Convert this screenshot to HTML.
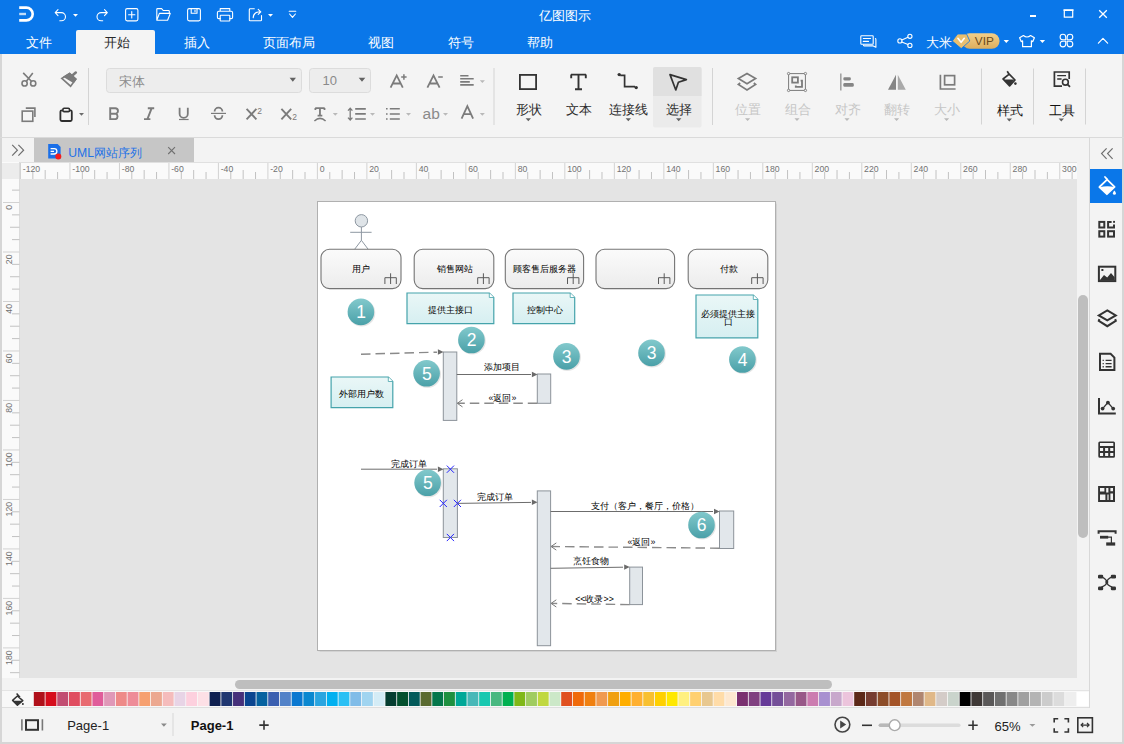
<!DOCTYPE html>
<html><head><meta charset="utf-8">
<style>
*{margin:0;padding:0;box-sizing:border-box}
html,body{width:1124px;height:744px;overflow:hidden;background:#f4f4f4;font-family:"Liberation Sans",sans-serif}
.a{position:absolute}
#root{position:relative;width:1124px;height:744px;overflow:hidden}
.t{position:absolute;white-space:nowrap;line-height:1}
svg{position:absolute;left:0;top:0;overflow:visible}
</style></head><body><div id="root">
<!-- title + menu bar -->
<div class="a" style="left:0;top:0;width:1124px;height:54px;background:#0a77e9"></div>
<!-- active tab -->
<div class="a" style="left:76px;top:30px;width:79px;height:24px;background:#f4f4f4;border-radius:2px 2px 0 0"></div>
<!-- ribbon -->
<div class="a" style="left:0;top:54px;width:1124px;height:83px;background:#f4f4f4"></div>
<div class="a" style="left:0;top:54px;width:2px;height:690px;background:#d6d6d6"></div>
<div class="a" style="left:1122px;top:54px;width:2px;height:690px;background:#d6d6d6"></div>
<div class="a" style="left:0;top:137px;width:1124px;height:1px;background:#dadada"></div>
<!-- tab bar -->
<div class="a" style="left:2px;top:138px;width:1088px;height:24px;background:#f3f3f3"></div>
<div class="a" style="left:34px;top:138px;width:160px;height:24px;background:#c6c6c6"></div>
<!-- rulers -->
<div class="a" style="left:2px;top:162px;width:1075px;height:18px;background:#fafafa;border-top:1px solid #e0e0e0;border-bottom:1px solid #dcdcdc"></div>
<div class="a" style="left:2px;top:162px;width:17.5px;height:516px;background:#fafafa;border-right:1px solid #dcdcdc"></div>
<div class="a" style="left:2px;top:163px;width:17px;height:16px;background:#ececec"></div>
<!-- canvas -->
<div class="a" style="left:20px;top:179px;width:1057px;height:499px;background:#e4e4e4"></div>
<!-- vertical scroll track -->
<div class="a" style="left:1077px;top:162px;width:13px;height:529px;background:#f3f3f3"></div>
<div class="a" style="left:1078px;top:295px;width:10px;height:243px;background:#bebebe;border-radius:5px"></div>
<!-- horizontal scroll -->
<div class="a" style="left:2px;top:678px;width:1075px;height:13px;background:#f3f3f3"></div>
<div class="a" style="left:235px;top:680px;width:597px;height:9px;background:#bebebe;border-radius:4.5px"></div>
<!-- palette -->
<div class="a" style="left:2px;top:690px;width:1088px;height:18px;background:#f8f8f8;border-top:1px solid #e4e4e4;border-bottom:1px solid #dedede"></div>
<!-- status bar -->
<div class="a" style="left:2px;top:708px;width:1120px;height:34px;background:#f3f3f3"></div>
<div class="a" style="left:0;top:742px;width:1124px;height:2px;background:#d6d6d6"></div>
<!-- right sidebar -->
<div class="a" style="left:1089px;top:138px;width:1px;height:570px;background:#d8d8d8"></div>
<div class="a" style="left:1090px;top:138px;width:32px;height:570px;background:#f3f3f3"></div>
<div class="a" style="left:1090px;top:169px;width:32px;height:34px;background:#0a77e9"></div>
<svg width="1124" height="744" font-family="Liberation Sans, sans-serif">
<g id="rulers">
<path d="M20.46,163 V179 M69.95,163 V179 M119.44,163 V179 M168.93,163 V179 M218.42,163 V179 M267.91,163 V179 M317.40,163 V179 M366.89,163 V179 M416.38,163 V179 M465.87,163 V179 M515.36,163 V179 M564.85,163 V179 M614.34,163 V179 M663.83,163 V179 M713.32,163 V179 M762.81,163 V179 M812.30,163 V179 M861.79,163 V179 M911.28,163 V179 M960.77,163 V179 M1010.26,163 V179 M1059.75,163 V179" stroke="#d2d2d2" stroke-width="1" fill="none"/>
<path d="M32.83,172 V179 M45.20,170 V179 M57.58,172 V179 M82.32,172 V179 M94.69,170 V179 M107.07,172 V179 M131.81,172 V179 M144.18,170 V179 M156.56,172 V179 M181.30,172 V179 M193.67,170 V179 M206.05,172 V179 M230.79,172 V179 M243.16,170 V179 M255.54,172 V179 M280.28,172 V179 M292.65,170 V179 M305.03,172 V179 M329.77,172 V179 M342.14,170 V179 M354.52,172 V179 M379.26,172 V179 M391.63,170 V179 M404.01,172 V179 M428.75,172 V179 M441.12,170 V179 M453.50,172 V179 M478.24,172 V179 M490.62,170 V179 M502.99,172 V179 M527.73,172 V179 M540.11,170 V179 M552.48,172 V179 M577.22,172 V179 M589.60,170 V179 M601.97,172 V179 M626.71,172 V179 M639.08,170 V179 M651.46,172 V179 M676.20,172 V179 M688.57,170 V179 M700.95,172 V179 M725.69,172 V179 M738.06,170 V179 M750.44,172 V179 M775.18,172 V179 M787.55,170 V179 M799.93,172 V179 M824.67,172 V179 M837.04,170 V179 M849.42,172 V179 M874.16,172 V179 M886.53,170 V179 M898.91,172 V179 M923.65,172 V179 M936.02,170 V179 M948.40,172 V179 M973.14,172 V179 M985.51,170 V179 M997.89,172 V179 M1022.63,172 V179 M1035.00,170 V179 M1047.38,172 V179 M1072.12,172 V179" stroke="#c2c2c2" stroke-width="1" fill="none"/>
<path d="M3,202.50 H19.5 M3,251.99 H19.5 M3,301.48 H19.5 M3,350.97 H19.5 M3,400.46 H19.5 M3,449.95 H19.5 M3,499.44 H19.5 M3,548.93 H19.5 M3,598.42 H19.5 M3,647.91 H19.5" stroke="#d2d2d2" stroke-width="1" fill="none"/>
<path d="M12,190.13 H19.5 M12,214.87 H19.5 M10,227.25 H19.5 M12,239.62 H19.5 M12,264.36 H19.5 M10,276.74 H19.5 M12,289.11 H19.5 M12,313.85 H19.5 M10,326.23 H19.5 M12,338.60 H19.5 M12,363.34 H19.5 M10,375.72 H19.5 M12,388.09 H19.5 M12,412.83 H19.5 M10,425.21 H19.5 M12,437.58 H19.5 M12,462.32 H19.5 M10,474.70 H19.5 M12,487.07 H19.5 M12,511.81 H19.5 M10,524.18 H19.5 M12,536.56 H19.5 M12,561.30 H19.5 M10,573.68 H19.5 M12,586.05 H19.5 M12,610.79 H19.5 M10,623.17 H19.5 M12,635.54 H19.5 M12,660.28 H19.5 M10,672.66 H19.5" stroke="#c2c2c2" stroke-width="1" fill="none"/>
<g font-size="8.7" fill="#727272"><text x="22.76" y="172">-120</text><text x="72.25" y="172">-100</text><text x="121.74" y="172">-80</text><text x="171.23" y="172">-60</text><text x="220.72" y="172">-40</text><text x="270.21" y="172">-20</text><text x="319.70" y="172">0</text><text x="369.19" y="172">20</text><text x="418.68" y="172">40</text><text x="468.17" y="172">60</text><text x="517.66" y="172">80</text><text x="567.15" y="172">100</text><text x="616.64" y="172">120</text><text x="666.13" y="172">140</text><text x="715.62" y="172">160</text><text x="765.11" y="172">180</text><text x="814.60" y="172">200</text><text x="864.09" y="172">220</text><text x="913.58" y="172">240</text><text x="963.07" y="172">260</text><text x="1012.56" y="172">280</text><text x="1062.05" y="172">300</text><text transform="translate(12,205.00) rotate(-90)" text-anchor="end">0</text><text transform="translate(12,254.49) rotate(-90)" text-anchor="end">20</text><text transform="translate(12,303.98) rotate(-90)" text-anchor="end">40</text><text transform="translate(12,353.47) rotate(-90)" text-anchor="end">60</text><text transform="translate(12,402.96) rotate(-90)" text-anchor="end">80</text><text transform="translate(12,452.45) rotate(-90)" text-anchor="end">100</text><text transform="translate(12,501.94) rotate(-90)" text-anchor="end">120</text><text transform="translate(12,551.43) rotate(-90)" text-anchor="end">140</text><text transform="translate(12,600.92) rotate(-90)" text-anchor="end">160</text><text transform="translate(12,650.41) rotate(-90)" text-anchor="end">180</text></g>
</g>
</svg>

<svg width="1124" height="744" font-family="Liberation Sans, sans-serif">
<g id="tabbar">
 <path d="M12.2,144.8 L17.4,150.2 L12.2,155.6 M18.4,144.8 L23.6,150.2 L18.4,155.6" fill="none" stroke="#6e6e6e" stroke-width="1.2"/>
 <path d="M48.2,144 H57.6 L60.6,147 V158.4 H48.2 Z" fill="#1a6fe8"/>
 <path d="M50.6,148.6 H54.2 A2.7,2.7 0 0 1 54.2,154 H50.6 M50.6,151.3 H54" fill="none" stroke="#fff" stroke-width="1.3"/>
 <circle cx="58.3" cy="156.4" r="3" fill="#f41c1c"/>
 <text x="68.2" y="156.7" font-size="12.2" fill="#1f72e6">UML网站序列</text>
 <path d="M168.2,147.2 L175,154 M175,147.2 L168.2,154" stroke="#707070" stroke-width="1.1"/>
</g>
<g id="sidebar" fill="none" stroke="#333" stroke-width="1.7">
 <path d="M1106.6,148.4 L1101.6,153.6 L1106.6,158.8 M1112.6,148.4 L1107.6,153.6 L1112.6,158.8" stroke="#6e6e6e" stroke-width="1.2"/>
 <path d="M1105,177 L1107.2,179.4" stroke="#fff" stroke-width="1.8" stroke-linecap="round"/>
 <path d="M1107.1,179.6 L1114.6,186.8 L1106.9,194.2 L1099.4,187 Z" stroke="#fff" stroke-width="1.8" stroke-linejoin="round"/>
 <path d="M1099.6,187.2 Q1107,185.2 1114.4,187 L1106.9,194.2 Z" fill="#fff" stroke="none"/>
 <path d="M1114.4,190.6 Q1115.9,192.4 1115.9,193.2 A1.5,1.5 0 0 1 1112.9,193.2 Q1112.9,192.4 1114.4,190.6 Z" fill="#fff" stroke="none"/>
 <rect x="1099.3" y="221.9" width="5" height="5.6" stroke-width="2"/><rect x="1099.3" y="231.2" width="5" height="5.4" stroke-width="2"/><rect x="1108.1" y="231.2" width="5.9" height="5.4" stroke-width="2"/>
 <path d="M1111.6,221.9 H1108.1 V227.5 H1114 V224.4" stroke-width="2"/>
 <rect x="1113.1" y="220.9" width="1.9" height="1.9" fill="#333" stroke="none"/>
 <rect x="1098.9" y="266.7" width="16.4" height="14.4" stroke-width="2"/>
 <path d="M1099.6,280.4 L1104,275 L1107.2,277.6 L1111,273 L1114.6,277.2 V280.4 Z" fill="#333" stroke="none"/>
 <rect x="1101.4" y="269" width="2" height="2" fill="#333" stroke="none"/>
 <path d="M1107.3,310.4 L1115.8,315.4 L1107.3,320.4 L1098.8,315.4 Z" stroke-width="2"/>
 <path d="M1099.4,319.2 L1098.8,320.8 L1107.3,326.2 L1115.8,320.8 L1115.2,319.2" stroke-width="2"/>
 <path d="M1100,353.8 H1110.6 L1114.4,357.6 V370 H1100 Z" stroke-width="2"/>
 <path d="M1102.6,360.4 H1103.8 M1105.6,360.4 H1111.6 M1102.6,363.6 H1103.8 M1105.6,363.6 H1111.6 M1102.6,366.8 H1103.8 M1105.6,366.8 H1111.6" stroke-width="1.4"/>
 <path d="M1099,398 V413.4 H1115.8" stroke-width="2"/>
 <path d="M1102.6,408.6 L1107.9,402.6 L1113.2,408.6" stroke-width="1.3"/>
 <circle cx="1107.9" cy="402.6" r="1.9" fill="#333" stroke="none"/><circle cx="1102.6" cy="408.6" r="1.9" fill="#333" stroke="none"/><circle cx="1113.2" cy="408.6" r="1.9" fill="#333" stroke="none"/>
 <path fill="#333" stroke="none" fill-rule="evenodd" d="M1099.8,441.4 H1113.5 Q1115,441.4 1115,442.9 V456.2 Q1115,457.7 1113.5,457.7 H1099.8 Q1098.3,457.7 1098.3,456.2 V442.9 Q1098.3,441.4 1099.8,441.4 Z M1100,443 H1113.3 V446.1 H1100 Z M1100,448 H1103.1 V451.1 H1100 Z M1105.1,448 H1108.2 V451.1 H1105.1 Z M1110.2,448 H1113.3 V451.1 H1110.2 Z M1100,453 H1103.1 V456.1 H1100 Z M1105.1,453 H1108.2 V456.1 H1105.1 Z M1110.2,453 H1113.3 V456.1 H1110.2 Z"/>
 <path fill="#333" stroke="none" fill-rule="evenodd" d="M1098.1,486 H1115 V502 H1098.1 Z M1100,488 H1104.4 V491.6 H1100 Z M1100,494.4 H1105.4 V500 H1100 Z M1106.2,488 V492.6 H1108.4 V488 Z M1110.4,488 H1113 V491.2 H1110.4 Z M1107.4,494.6 H1108.6 V500 H1107.4 Z M1110.4,493.4 H1113 V500 H1110.4 Z"/>
 <path d="M1098.6,533.8 V531.2 H1115.6 V533.8" stroke-width="2"/>
 <rect x="1100" y="535.8" width="8.2" height="2.8" fill="#333" stroke="none"/>
 <path d="M1108,537.2 H1111.4 V543" stroke-width="1.2"/>
 <rect x="1106.2" y="542.4" width="9" height="3.2" fill="#333" stroke="none"/>
 <path d="M1101.4,576.8 Q1106.8,579 1106.8,582 Q1106.8,585 1101.4,587.2 M1112.2,576.8 Q1106.8,579 1106.8,582 Q1106.8,585 1112.2,587.2" stroke-width="1.3"/>
 <rect x="1098" y="574.8" width="5.2" height="3.8" rx="1.3" fill="#333" stroke="none"/><rect x="1110.8" y="574.8" width="5.2" height="3.8" rx="1.3" fill="#333" stroke="none"/>
 <rect x="1098" y="586.4" width="5.2" height="3.8" rx="1.3" fill="#333" stroke="none"/><rect x="1110.8" y="586.4" width="5.2" height="3.8" rx="1.3" fill="#333" stroke="none"/>
 <rect x="1105.4" y="580.6" width="2.8" height="2.8" fill="#333" stroke="none"/>
</g>
<g id="status">
 <path d="M21.9,719.2 V730.6 M42.4,719.2 V730.6" stroke="#777" stroke-width="1.6"/>
 <rect x="26" y="720.2" width="12" height="9.6" fill="none" stroke="#333" stroke-width="2"/>
 <text x="67.2" y="729.8" font-size="13" fill="#222">Page-1</text>
 <path d="M161,723.6 H166.8 L163.9,726.8 Z" fill="#8a8a8a"/>
 <rect x="172.5" y="713" width="1" height="23" fill="#d8d8d8"/>
 <text x="190.8" y="729.8" font-size="13" font-weight="bold" fill="#111">Page-1</text>
 <path d="M264,720.4 V729.8 M259.3,725.1 H268.7" stroke="#333" stroke-width="1.6"/>
 <circle cx="842.4" cy="724.6" r="7.4" fill="none" stroke="#444" stroke-width="1.6"/>
 <path d="M840.2,720.6 L846.2,724.6 L840.2,728.6 Z" fill="#444"/>
 <path d="M862,725.3 H872" stroke="#333" stroke-width="1.6"/>
 <rect x="878.6" y="723.4" width="82" height="3.6" rx="1.8" fill="#dcdcdc"/>
 <rect x="878.6" y="723.4" width="16" height="3.6" rx="1.8" fill="#b8b8b8"/>
 <circle cx="894.7" cy="725.2" r="5.4" fill="#fff" stroke="#aaa" stroke-width="1.4"/>
 <path d="M973,720.6 V730 M968.3,725.3 H977.7" stroke="#333" stroke-width="1.6"/>
 <text x="994.6" y="731" font-size="13" fill="#222">65%</text>
 <path d="M1029.4,724 H1035.4 L1032.4,726.8 Z" fill="#999"/>
 <path d="M1054.2,722.6 V718.7 H1058.2 M1064.4,718.7 H1068.4 V722.6 M1068.4,728.2 V732 H1064.4 M1058.2,732 H1054.2 V728.2" fill="none" stroke="#333" stroke-width="1.6"/>
 <rect x="1077.8" y="717.8" width="14.6" height="14.6" fill="none" stroke="#333" stroke-width="1.6"/>
 <path d="M1081.2,725.1 H1089 M1083.2,723 L1081.1,725.1 L1083.2,727.2 M1087,723 L1089.1,725.1 L1087,727.2" fill="none" stroke="#333" stroke-width="1.2"/>
 <path d="M16.6,693.4 L20,697.2 M12.6,700.4 L17.4,696 L22.8,700.6 L17.4,705.2 Z" fill="none" stroke="#333" stroke-width="1.5" stroke-linejoin="round"/>
 <path d="M12.8,700.8 H22.6 L17.4,705 Z" fill="#333"/>
 <circle cx="22.9" cy="703.9" r="1" fill="#333"/>
</g>
</svg>
<svg width="1124" height="744"><g id="palette"><rect x="33.80" y="692" width="10.9" height="14" fill="#b0101a"/><rect x="45.52" y="692" width="10.9" height="14" fill="#d60c1c"/><rect x="57.24" y="692" width="10.9" height="14" fill="#c24d72"/><rect x="68.96" y="692" width="10.9" height="14" fill="#e04d60"/><rect x="80.68" y="692" width="10.9" height="14" fill="#e86a70"/><rect x="92.40" y="692" width="10.9" height="14" fill="#e05c9a"/><rect x="104.12" y="692" width="10.9" height="14" fill="#e098b8"/><rect x="115.84" y="692" width="10.9" height="14" fill="#ee8a88"/><rect x="127.56" y="692" width="10.9" height="14" fill="#ee8c98"/><rect x="139.28" y="692" width="10.9" height="14" fill="#f6a070"/><rect x="151.00" y="692" width="10.9" height="14" fill="#eca890"/><rect x="162.72" y="692" width="10.9" height="14" fill="#f5bcbc"/><rect x="174.44" y="692" width="10.9" height="14" fill="#e8d4e6"/><rect x="186.16" y="692" width="10.9" height="14" fill="#fdd0de"/><rect x="197.88" y="692" width="10.9" height="14" fill="#fde0e6"/><rect x="209.60" y="692" width="10.9" height="14" fill="#0f2050"/><rect x="221.32" y="692" width="10.9" height="14" fill="#1f3670"/><rect x="233.04" y="692" width="10.9" height="14" fill="#46307a"/><rect x="244.76" y="692" width="10.9" height="14" fill="#0a4590"/><rect x="256.48" y="692" width="10.9" height="14" fill="#0562a0"/><rect x="268.20" y="692" width="10.9" height="14" fill="#3b5fb0"/><rect x="279.92" y="692" width="10.9" height="14" fill="#5282c8"/><rect x="291.64" y="692" width="10.9" height="14" fill="#0a78d0"/><rect x="303.36" y="692" width="10.9" height="14" fill="#0a88d0"/><rect x="315.08" y="692" width="10.9" height="14" fill="#2aa5e0"/><rect x="326.80" y="692" width="10.9" height="14" fill="#00b0f0"/><rect x="338.52" y="692" width="10.9" height="14" fill="#2ac0f4"/><rect x="350.24" y="692" width="10.9" height="14" fill="#80bce8"/><rect x="361.96" y="692" width="10.9" height="14" fill="#a0d4f0"/><rect x="373.68" y="692" width="10.9" height="14" fill="#d4ecf6"/><rect x="385.40" y="692" width="10.9" height="14" fill="#053d30"/><rect x="397.12" y="692" width="10.9" height="14" fill="#03502e"/><rect x="408.84" y="692" width="10.9" height="14" fill="#035a5a"/><rect x="420.56" y="692" width="10.9" height="14" fill="#5a6a30"/><rect x="432.28" y="692" width="10.9" height="14" fill="#04764a"/><rect x="444.00" y="692" width="10.9" height="14" fill="#1e9040"/><rect x="455.72" y="692" width="10.9" height="14" fill="#00a898"/><rect x="467.44" y="692" width="10.9" height="14" fill="#48b8b8"/><rect x="479.16" y="692" width="10.9" height="14" fill="#18c8b0"/><rect x="490.88" y="692" width="10.9" height="14" fill="#48b880"/><rect x="502.60" y="692" width="10.9" height="14" fill="#00b050"/><rect x="514.32" y="692" width="10.9" height="14" fill="#80b818"/><rect x="526.04" y="692" width="10.9" height="14" fill="#a0cc60"/><rect x="537.76" y="692" width="10.9" height="14" fill="#c0d840"/><rect x="549.48" y="692" width="10.9" height="14" fill="#cce8c8"/><rect x="561.20" y="692" width="10.9" height="14" fill="#e05020"/><rect x="572.92" y="692" width="10.9" height="14" fill="#f06a0a"/><rect x="584.64" y="692" width="10.9" height="14" fill="#f08010"/><rect x="596.36" y="692" width="10.9" height="14" fill="#f09a50"/><rect x="608.08" y="692" width="10.9" height="14" fill="#f0a010"/><rect x="619.80" y="692" width="10.9" height="14" fill="#ffae00"/><rect x="631.52" y="692" width="10.9" height="14" fill="#ffb030"/><rect x="643.24" y="692" width="10.9" height="14" fill="#f8c030"/><rect x="654.96" y="692" width="10.9" height="14" fill="#ffd000"/><rect x="666.68" y="692" width="10.9" height="14" fill="#ffe800"/><rect x="678.40" y="692" width="10.9" height="14" fill="#fff080"/><rect x="690.12" y="692" width="10.9" height="14" fill="#ffd070"/><rect x="701.84" y="692" width="10.9" height="14" fill="#e8c890"/><rect x="713.56" y="692" width="10.9" height="14" fill="#ffdca8"/><rect x="725.28" y="692" width="10.9" height="14" fill="#fde8d0"/><rect x="737.00" y="692" width="10.9" height="14" fill="#7a3070"/><rect x="748.72" y="692" width="10.9" height="14" fill="#804080"/><rect x="760.44" y="692" width="10.9" height="14" fill="#663a98"/><rect x="772.16" y="692" width="10.9" height="14" fill="#744f98"/><rect x="783.88" y="692" width="10.9" height="14" fill="#9468a0"/><rect x="795.60" y="692" width="10.9" height="14" fill="#985888"/><rect x="807.32" y="692" width="10.9" height="14" fill="#cc7cb0"/><rect x="819.04" y="692" width="10.9" height="14" fill="#a890d0"/><rect x="830.76" y="692" width="10.9" height="14" fill="#c8a8cc"/><rect x="842.48" y="692" width="10.9" height="14" fill="#ecc4dc"/><rect x="854.20" y="692" width="10.9" height="14" fill="#5c2818"/><rect x="865.92" y="692" width="10.9" height="14" fill="#763c30"/><rect x="877.64" y="692" width="10.9" height="14" fill="#8c4c28"/><rect x="889.36" y="692" width="10.9" height="14" fill="#a45428"/><rect x="901.08" y="692" width="10.9" height="14" fill="#c07840"/><rect x="912.80" y="692" width="10.9" height="14" fill="#b08670"/><rect x="924.52" y="692" width="10.9" height="14" fill="#e0b888"/><rect x="936.24" y="692" width="10.9" height="14" fill="#d4ccc8"/><rect x="947.96" y="692" width="10.9" height="14" fill="#cad4cc"/><rect x="959.68" y="692" width="10.9" height="14" fill="#000000"/><rect x="971.40" y="692" width="10.9" height="14" fill="#3e3836"/><rect x="983.12" y="692" width="10.9" height="14" fill="#5a5858"/><rect x="994.84" y="692" width="10.9" height="14" fill="#707070"/><rect x="1006.56" y="692" width="10.9" height="14" fill="#888888"/><rect x="1018.28" y="692" width="10.9" height="14" fill="#a0a0a0"/><rect x="1030.00" y="692" width="10.9" height="14" fill="#b4b4b4"/><rect x="1041.72" y="692" width="10.9" height="14" fill="#cccccc"/><rect x="1053.44" y="692" width="10.9" height="14" fill="#dcdcdc"/><rect x="1065.16" y="692" width="10.9" height="14" fill="#eeeeee"/><rect x="1076.88" y="692" width="11.8" height="14" fill="#ffffff"/></g></svg>
<!-- page -->
<div class="a" style="left:317px;top:201px;width:459px;height:450px;background:#fff;border:1px solid #b0b0b0;box-shadow:0.5px 0.5px 1px rgba(0,0,0,0.08)"></div>

<svg width="1124" height="744" font-family="Liberation Sans, sans-serif">
<g id="titleicons" fill="none" stroke="#fff" stroke-width="1.1" stroke-linecap="round" stroke-linejoin="round">
 <path d="M19.2,7.6 H26.3 A6.4,6.4 0 0 1 26.3,20.4 H19.2" stroke-width="2.6" stroke-linecap="butt"/>
 <path d="M19.2,14 H26" stroke-width="2.4" stroke-opacity="0.75" stroke-linecap="butt"/>
 <path d="M58,9.6 L55.2,12.6 L58,15.6 M55.6,12.6 H61.4 A4.1,4.1 0 0 1 61.4,20.8 H59.8"/>
 <path d="M73,14 H78 L75.5,16.8 Z" fill="#fff" stroke="none"/>
 <path d="M104.5,9.6 L107.3,12.6 L104.5,15.6 M106.9,12.6 H101.1 A4.1,4.1 0 0 0 101.1,20.8 H102.7"/>
 <rect x="125.6" y="8.6" width="12.3" height="12.3" rx="1.6"/>
 <path d="M131.75,11.6 V17.9 M128.6,14.75 H134.9"/>
 <path d="M156.8,20.3 V9.3 Q156.8,8.6 157.5,8.6 H161.6 L163.2,10.5 H168.6 Q169.3,10.5 169.3,11.2 V13.3 M156.8,20.3 H167.6 L170.3,13.4 H159.4 Z"/>
 <rect x="187.6" y="8.6" width="12.8" height="12.3" rx="1.6"/>
 <path d="M191.2,8.8 V13.2 H197 V8.8 M195,10 V11.8"/>
 <path d="M220.2,11.3 V8.6 H229.8 V11.3 M220.2,18.6 H218.8 Q217.4,18.6 217.4,17.2 V12.7 Q217.4,11.3 218.8,11.3 H231.2 Q232.6,11.3 232.6,12.7 V17.2 Q232.6,18.6 231.2,18.6 H229.8"/>
 <rect x="220.2" y="15.2" width="9.6" height="5.8" rx="0.6"/>
 <path d="M254.3,8.8 H250.2 Q249.3,8.8 249.3,9.7 V20 Q249.3,20.8 250.2,20.8 H260.6 Q261.5,20.8 261.5,20 V15.6"/>
 <path d="M253.2,17.6 Q253.6,11.8 260.6,11.8 M258.2,9.3 L260.8,11.8 L258.2,14.3"/>
 <path d="M268,14 H273 L270.5,16.8 Z" fill="#fff" stroke="none"/>
 <path d="M289.2,11.3 H295.8 M289.6,14 L292.5,17.4 L295.4,14" stroke-width="1.1"/>
 <rect x="1030" y="15" width="6" height="2" fill="#fff" stroke="none"/>
 <path d="M1064.3,10.4 H1072.7 V17.2 H1064.3 Z" stroke-width="1.2"/>
 <path d="M1064,10 H1073" stroke-width="1.6"/>
 <path d="M1099.2,10.2 L1106.8,17.8 M1106.8,10.2 L1099.2,17.8" stroke-width="1.3" stroke-linecap="butt"/>
 <path d="M861.5,35.8 H872.5 Q873.2,35.8 873.2,36.5 V43.5 Q873.2,44.2 872.5,44.2 H861.5 Q860.8,44.2 860.8,43.5 V36.5 Q860.8,35.8 861.5,35.8 Z M863.3,38.5 H870.6 M863.3,41.4 H868.5"/>
 <path d="M875.4,38.6 Q875.9,38.7 875.9,39.4 V47.2 L873.2,45.9 H864.2 Q863.4,45.9 863.4,45.1"/>
 <circle cx="899.9" cy="40.9" r="2.1"/><circle cx="909.9" cy="36.3" r="2.1"/><circle cx="909.9" cy="45.4" r="2.1"/>
 <path d="M901.8,39.9 L908,37.3 M901.8,41.9 L908,44.4"/>
 <path d="M1003.6,40 H1009 L1006.3,43 Z" fill="#fff" stroke="none"/>
 <path d="M1023.4,35.5 L1019.6,37.8 L1021.2,41.6 L1022.6,40.9 V46.7 H1031.4 V40.9 L1032.8,41.6 L1034.4,37.8 L1030.6,35.5 Q1027,38.5 1023.4,35.5 Z" stroke-width="1.2"/>
 <path d="M1039.7,40 H1045.1 L1042.4,43 Z" fill="#fff" stroke="none"/>
 <path d="M1065.7,39.8 H1062.9 A2.8,2.8 0 1 1 1065.7,37 Z M1067.2,39.8 H1070 A2.8,2.8 0 1 0 1067.2,37 Z M1065.7,41.3 H1062.9 A2.8,2.8 0 1 0 1065.7,44.1 Z M1067.2,41.3 H1070 A2.8,2.8 0 1 1 1067.2,44.1 Z" stroke-width="1.1"/>
 <path d="M1098.4,43.2 L1103,38.4 L1107.6,43.2" stroke-width="1.2"/>
</g>
<g id="vip">
 <defs><linearGradient id="gold" x1="0" y1="0" x2="0" y2="1"><stop offset="0" stop-color="#f3cf88"/><stop offset="1" stop-color="#dcae5e"/></linearGradient></defs>
 <rect x="962" y="33.3" width="37.6" height="15.5" rx="7.75" fill="url(#gold)"/>
 <path d="M952.3,41 L957.6,34 H966.6 L969.8,41 L961.2,48.6 Z" fill="#e9bf6f" stroke="#0a77e9" stroke-width="0.8"/>
 <path d="M957.9,38.3 L961.1,42.3 L964.3,38.3" fill="none" stroke="#fff" stroke-width="1.6" stroke-linecap="round" stroke-linejoin="round"/>
 <text x="974.8" y="45.2" font-size="11.8" fill="#6a4a1c">VIP</text>
</g>
<g id="menutext" font-size="12.6" fill="#fff">
 <text x="538.6" y="20.4" font-size="12.5">亿图图示</text>
 <text x="25.9" y="46.9">文件</text>
 <text x="103.9" y="47.2" fill="#2a2a2a">开始</text>
 <text x="183.9" y="46.9">插入</text>
 <text x="263.4" y="46.9">页面布局</text>
 <text x="367.9" y="46.9">视图</text>
 <text x="447.9" y="46.9">符号</text>
 <text x="527.4" y="46.9">帮助</text>
 <text x="926" y="47">大米</text>
</g>
</svg>

<svg width="1124" height="744" font-family="Liberation Sans, sans-serif">
<g id="ribbonbg">
 <rect x="106.5" y="68.5" width="195" height="24" rx="3" fill="#ededed" stroke="#dcdcdc"/>
 <rect x="309.5" y="68.5" width="61" height="24" rx="3" fill="#ededed" stroke="#dcdcdc"/>
 <rect x="653" y="67" width="48.6" height="60.6" rx="2" fill="#ebebeb"/>
 <path d="M655,67 H699.6 Q701.6,67 701.6,69 V96 H653 V69 Q653,67 655,67 Z" fill="#e0e0e0"/>
 <g fill="#d4d4d4"><rect x="88" y="68" width="1" height="57"/><rect x="493.5" y="68" width="1" height="57"/><rect x="712" y="68" width="1" height="57"/><rect x="981" y="68.5" width="1" height="56"/><rect x="1033" y="68.5" width="1" height="56"/><rect x="1085" y="68.5" width="1" height="56"/></g>
</g>
<g id="ribbonicons" fill="none" stroke="#7b7b7b" stroke-width="1.6">
 <circle cx="24.6" cy="83.4" r="2.6"/><circle cx="33.2" cy="83.4" r="2.6"/>
 <path d="M23.2,72.9 L31.4,81.3 M32.8,72.9 L26.4,81.3"/>
 <path d="M61.8,78.4 L69.6,73.6 L75.8,79.2 L70.6,86.2 Z"/>
 <path d="M64.5,76.7 L69.6,73.6 L75.8,79.2 L73.6,82.2 Z" fill="#7b7b7b"/>
 <path d="M71.2,76.4 L75.8,72.6" stroke-width="2.6" stroke-linecap="round"/>
 <rect x="22.2" y="111.1" width="10.6" height="10.2"/>
 <path d="M25.8,108.1 H34.9 V117"/>
 <rect x="60.4" y="110.4" width="11.4" height="10.6" rx="1.4" stroke="#2e2e2e" stroke-width="1.8"/>
 <rect x="62.9" y="108.2" width="6.6" height="3.4" rx="1.2" stroke="#2e2e2e" stroke-width="1.6" fill="#f4f4f4"/>
 <path d="M79,112.9 H84 L81.5,115.8 Z" fill="#6b6b6b" stroke="none"/>
 <path d="M110.2,108.2 H115.2 A2.75,2.75 0 0 1 115.2,113.7 H110.2 Z M110.2,113.7 H115.8 A2.95,2.95 0 0 1 115.8,119.1 H110.2 Z" stroke-width="1.9"/>
 <path d="M147.8,108.3 H154.2 M144,119.1 H150.4 M151.6,108.3 L147.4,119.1" stroke-width="1.9"/>
 <path d="M179.6,107.8 V113.8 A4.1,4.1 0 0 0 187.8,113.8 V107.8" stroke-width="1.8"/>
 <path d="M179,119.5 H188.6" stroke-width="1.2"/>
 <path d="M211,113.4 H226" stroke-width="1.2"/>
 <path d="M214.6,111.6 A3.9,3.9 0 0 1 222.4,111.6 M214.6,115.3 A3.9,3.9 0 0 0 222.4,115.3" stroke-width="1.8"/>
 <path d="M246.6,108.9 L256.4,119.4 M256.4,108.9 L246.6,119.4" stroke-width="1.9"/>
 <path d="M281.4,108.9 L291.2,119.4 M291.2,108.9 L281.4,119.4" stroke-width="1.9"/>
 <path d="M315.2,108.1 H324.7 M319.95,108.1 V115.6 M317.6,115.6 H322.3 M315.4,108.1 V110 M324.5,108.1 V110" stroke-width="1.8"/>
 <path d="M314.4,121 Q320,115.8 325.6,121" stroke-width="1.5"/>
 <path d="M350.2,108.2 V120 M348,110.6 L350.2,108.2 L352.4,110.6 M348,117.6 L350.2,120 L352.4,117.6" stroke-width="1.3"/>
 <path d="M355.2,108.8 H365.8 M355.2,113.8 H365.8 M355.2,119 H365.8" stroke-width="1.7"/>
 <path d="M386,108.8 H387.6 M386,114 H387.6 M386,119 H387.6 M389.8,108.8 H399.8 M389.8,114 H399.8 M389.8,119 H399.8" stroke-width="1.6"/>
 <path d="M390.6,87.6 L396.7,75.4 L402.8,87.6 M392.6,83.5 H400.8" stroke-width="1.8"/>
 <path d="M401.2,77 H406.6 M403.9,74.3 V79.7" stroke-width="1.5"/>
 <path d="M427.4,87.6 L433.5,75.4 L439.6,87.6 M429.4,83.5 H437.6" stroke-width="1.8"/>
 <path d="M438.2,77 H442.8" stroke-width="1.5"/>
 <path d="M460.2,75.8 H468.5 M460.2,78.8 H473.7 M460.2,81.9 H469.8 M460.2,84.9 H473.7" stroke-width="1.6"/>
 <path d="M461.6,118.7 L467.35,106.2 L473.1,118.7 M463.7,114.2 H471" stroke-width="1.8"/>
 <path d="M888,89.8 L896,74.7 V89.8 Z" fill="#858585" stroke="none"/>
 <path d="M897.8,74.7 L905.8,89.8 H897.8 Z" fill="#a9a9a9" stroke="none"/>
 <path d="M940.4,74.7 V89 H955.6" stroke-width="1.7"/>
 <rect x="944.6" y="75.6" width="10" height="9.2" stroke-width="1.7"/>
 <path d="M747,73.5 L755.6,78.6 L747,83.7 L738.4,78.6 Z" stroke-width="1.7"/>
 <path d="M740.2,83 L738.4,84.5 L747,90 L755.6,84.5 L753.8,83" stroke-width="1.7"/>
 <rect x="788.6" y="73.6" width="16.8" height="16.8" stroke-width="1"/>
 <g fill="#f4f4f4" stroke-width="0.9"><circle cx="788.6" cy="73.6" r="1.2"/><circle cx="805.4" cy="73.6" r="1.2"/><circle cx="788.6" cy="90.4" r="1.2"/><circle cx="805.4" cy="90.4" r="1.2"/></g>
 <rect x="792.2" y="77.3" width="5.7" height="5.3" stroke-width="1.8"/>
 <path d="M800.6,80.6 H802 V86.9 H795.8 V85.6" stroke-width="1.8"/>
 <path d="M840.8,73.5 V90.5" stroke="#a3a3a3" stroke-width="1.6"/>
 <rect x="843.3" y="77.3" width="7.6" height="3.2" rx="1.4" fill="#858585" stroke="none"/>
 <rect x="843.3" y="83.1" width="10.5" height="3.7" rx="1.4" fill="#858585" stroke="none"/>
</g>
<g fill="#b9b9b9">
 <path d="M332.8,113 H337.8 L335.3,115.7 Z M370,113 H375 L372.5,115.7 Z M406,113 H411 L408.5,115.7 Z M443,113 H448 L445.5,115.7 Z M479.8,113 H484.9 L482.35,115.7 Z M479.8,80.3 H484.9 L482.35,83 Z"/>
 <path d="M745,118.2 H750.2 L747.6,121 Z M794.4,118.2 H799.6 L797,121 Z M844.4,118.2 H849.6 L847,121 Z M894,118.2 H899.2 L896.6,121 Z M944,118.2 H949.2 L946.6,121 Z"/>
</g>
<g fill="#626262">
 <path d="M289.6,77.8 H296 L292.8,81.8 Z M358.7,77.8 H365.3 L362,81.8 Z"/>
 <path d="M525.6,118.2 H531 L528.3,121.2 Z M625.6,118.2 H631 L628.3,121.2 Z M676,118.2 H681.4 L678.7,121.2 Z M1006.6,118.4 H1012 L1009.3,121.4 Z M1058.6,118.4 H1064 L1061.3,121.4 Z"/>
</g>
<g id="darkicons" fill="none" stroke="#333" stroke-width="1.8">
 <rect x="519.9" y="74.9" width="16.2" height="14.2"/>
 <path d="M571,74.6 H586 M578.5,74.6 V89.2 M575,89.2 H582 M571.2,74.6 V78.2 M585.8,74.6 V78.2" stroke-width="1.9"/>
 <path d="M620.2,75.4 H624.6 V86.6 H635" stroke-width="1.7"/>
 <circle cx="619.2" cy="74.6" r="1.7" fill="#333" stroke="none"/><circle cx="636.2" cy="87.6" r="1.7" fill="#333" stroke="none"/>
 <path d="M670,74.6 L686.4,79.6 L678.4,82.2 L675.8,90 Z" stroke-width="1.7" stroke-linejoin="round"/>
 <path d="M1007.2,71.2 L1009.6,75 M1003,79 L1009.2,74.2 L1015,80 L1009.6,85.8 Z" stroke-width="1.7" stroke-linejoin="round"/>
 <path d="M1003.4,79.4 H1014.6 L1009.6,85.4 Z" fill="#333" stroke="none"/>
 <circle cx="1015.4" cy="83.6" r="1.3" fill="#333" stroke="none"/>
 <path d="M1062,86.2 H1054.4 V72 H1069.2 V79" stroke-width="1.7"/>
 <path d="M1057.2,75.6 H1066 M1057.2,79 H1061.6" stroke-width="1.4"/>
 <circle cx="1065.4" cy="82.2" r="2.9" stroke-width="1.6"/>
 <path d="M1067.5,84.3 L1070,86.8" stroke-width="1.8"/>
</g>
<g font-size="12">
 <text x="118.6" y="86" fill="#8e8e8e" font-size="13.2">宋体</text>
 <text x="322.5" y="85.2" fill="#8a8a8a" font-size="13">10</text>
 <text x="422.6" y="119.2" fill="#8a8a8a" font-size="15.5">ab</text>
 <text x="257.2" y="114.4" fill="#7b7b7b" font-size="8.5">2</text>
 <text x="292.2" y="120.2" fill="#7b7b7b" font-size="8.5">2</text>
 <g fill="#2c2c2c" font-size="12.8"><text x="515.5" y="113.6">形状</text><text x="566" y="113.6">文本</text><text x="608.7" y="113.6">连接线</text><text x="665.6" y="113.6">选择</text><text x="997" y="114.6" fill="#111">样式</text><text x="1049" y="114.6" fill="#111">工具</text></g>
 <g fill="#c6c6c6" font-size="12.8"><text x="735" y="113.6">位置</text><text x="784.7" y="113.6">组合</text><text x="834.6" y="113.6">对齐</text><text x="883.7" y="113.6">翻转</text><text x="934.2" y="113.6">大小</text></g>
</g>
</svg>
<svg width="1124" height="744" font-family="Liberation Sans, sans-serif">
<defs>
 <linearGradient id="boxg" x1="0" y1="0" x2="0" y2="1"><stop offset="0" stop-color="#fbfbfb"/><stop offset="1" stop-color="#ececec"/></linearGradient>
 <linearGradient id="noteg" x1="0" y1="0" x2="0" y2="1"><stop offset="0" stop-color="#eaf7f7"/><stop offset="1" stop-color="#d6eff1"/></linearGradient>
 <linearGradient id="circg" x1="0" y1="0" x2="0" y2="1"><stop offset="0" stop-color="#82c9cc"/><stop offset="1" stop-color="#4aa0a8"/></linearGradient>
</defs>
<g id="diagram">
<circle cx="361.4" cy="220.8" r="6.2" fill="#dfe4e8" stroke="#8e98a2" stroke-width="1"/><path d="M350.2,232.3 H371.6 M361.4,227 V240.3 L354.6,249.3 M361.4,240.3 L368.2,249.3" fill="none" stroke="#8e98a2" stroke-width="1"/><rect x="321.0" y="249.3" width="80.0" height="39.3" rx="8.5" fill="url(#boxg)" stroke="#747474" stroke-width="1.1"/><path d="M384.9,284.0 V277.7 H396.3 V284.0 M390.6,273.3 V284.0" fill="none" stroke="#5a5a5a" stroke-width="1"/><rect x="414.2" y="249.3" width="79.6" height="39.3" rx="8.5" fill="url(#boxg)" stroke="#747474" stroke-width="1.1"/><path d="M477.7,284.0 V277.7 H489.1 V284.0 M483.4,273.3 V284.0" fill="none" stroke="#5a5a5a" stroke-width="1"/><rect x="505.3" y="249.3" width="78.3" height="39.3" rx="8.5" fill="url(#boxg)" stroke="#747474" stroke-width="1.1"/><path d="M567.5,284.0 V277.7 H578.9 V284.0 M573.2,273.3 V284.0" fill="none" stroke="#5a5a5a" stroke-width="1"/><rect x="596.0" y="249.3" width="78.6" height="39.3" rx="8.5" fill="url(#boxg)" stroke="#747474" stroke-width="1.1"/><path d="M658.5,284.0 V277.7 H669.9 V284.0 M664.2,273.3 V284.0" fill="none" stroke="#5a5a5a" stroke-width="1"/><rect x="688.2" y="249.3" width="79.6" height="39.3" rx="8.5" fill="url(#boxg)" stroke="#747474" stroke-width="1.1"/><path d="M751.7,284.0 V277.7 H763.1 V284.0 M757.4,273.3 V284.0" fill="none" stroke="#5a5a5a" stroke-width="1"/><path d="M407,293 H489.3 L493.8,297.5 V323.6 H407 Z" fill="url(#noteg)" stroke="#45a3ab" stroke-width="1.2"/><path d="M489.3,293 V297.5 H493.8" fill="#fff" stroke="#45a3ab" stroke-width="0.8"/><path d="M513,293 H570.2 L574.7,297.5 V323.6 H513 Z" fill="url(#noteg)" stroke="#45a3ab" stroke-width="1.2"/><path d="M570.2,293 V297.5 H574.7" fill="#fff" stroke="#45a3ab" stroke-width="0.8"/><path d="M696,295 H753.3 L757.8,299.5 V337.8 H696 Z" fill="url(#noteg)" stroke="#45a3ab" stroke-width="1.2"/><path d="M753.3,295 V299.5 H757.8" fill="#fff" stroke="#45a3ab" stroke-width="0.8"/><path d="M331.1,377 H388.3 L392.8,381.5 V407.6 H331.1 Z" fill="url(#noteg)" stroke="#45a3ab" stroke-width="1.2"/><path d="M388.3,377 V381.5 H392.8" fill="#fff" stroke="#45a3ab" stroke-width="0.8"/><rect x="443.3" y="352" width="13.5" height="68.4" fill="#e2e7eb" stroke="#8c939a" stroke-width="1"/><rect x="537.3" y="374" width="13.4" height="29.3" fill="#e2e7eb" stroke="#8c939a" stroke-width="1"/><rect x="443.3" y="468.8" width="14.1" height="68.7" fill="#e2e7eb" stroke="#8c939a" stroke-width="1"/><rect x="537.3" y="490.9" width="13.3" height="154.8" fill="#e2e7eb" stroke="#8c939a" stroke-width="1"/><rect x="719.5" y="511" width="14.2" height="37.5" fill="#e2e7eb" stroke="#8c939a" stroke-width="1"/><rect x="629.7" y="567.1" width="12.8" height="37.5" fill="#e2e7eb" stroke="#8c939a" stroke-width="1"/><path d="M361,354.2 L437,352.2" stroke="#8a8a8a" stroke-width="1.4" fill="none" stroke-dasharray="9.5,5"/><path d="M443.5,352 L437.9,349.3 L437.9,354.7 Z" fill="#6a6a6a"/><path d="M456.8,374.5 H531" stroke="#6c6c6c" stroke-width="1" fill="none"/><path d="M537.5,374.5 L531.9,371.8 L531.9,377.2 Z" fill="#6a6a6a"/><path d="M537.3,403.3 H457.5" stroke="#8a8a8a" stroke-width="1.4" fill="none" stroke-dasharray="9.5,5"/><path d="M462.5,399.7 L457.3,403.3 L462.5,406.9" fill="none" stroke="#777" stroke-width="1"/><path d="M361,469.2 H437" stroke="#6c6c6c" stroke-width="1" fill="none"/><path d="M443.5,469.2 L437.9,466.5 L437.9,471.9 Z" fill="#6a6a6a"/><path d="M457.4,503.4 L531,502.4" stroke="#6c6c6c" stroke-width="1" fill="none"/><path d="M537.5,502.3 L531.9,499.6 L531.9,505.0 Z" fill="#6a6a6a"/><path d="M550.6,511.5 H713" stroke="#6c6c6c" stroke-width="1" fill="none"/><path d="M719.6,511.5 L714.0,508.8 L714.0,514.2 Z" fill="#6a6a6a"/><path d="M719.5,548.2 L551.5,546.5" stroke="#8a8a8a" stroke-width="1.4" fill="none" stroke-dasharray="9.5,5"/><path d="M556.3,542.9 L551.1,546.5 L556.3,550.1" fill="none" stroke="#777" stroke-width="1"/><path d="M550.6,568.3 L623,567.2" stroke="#6c6c6c" stroke-width="1" fill="none"/><path d="M629.8,567.1 L624.2,564.4 L624.2,569.8 Z" fill="#6a6a6a"/><path d="M629.7,604.6 L551.5,603.4" stroke="#8a8a8a" stroke-width="1.4" fill="none" stroke-dasharray="9.5,5"/><path d="M556.3,599.8 L551.1,603.4 L556.3,607.0" fill="none" stroke="#777" stroke-width="1"/><path d="M446.79999999999995,465.59999999999997 L454.0,472.8 M454.0,465.59999999999997 L446.79999999999995,472.8" stroke="#2424ff" stroke-width="1"/><path d="M439.7,499.79999999999995 L446.90000000000003,507.0 M446.90000000000003,499.79999999999995 L439.7,507.0" stroke="#2424ff" stroke-width="1"/><path d="M453.79999999999995,499.79999999999995 L461.0,507.0 M461.0,499.79999999999995 L453.79999999999995,507.0" stroke="#2424ff" stroke-width="1"/><path d="M446.79999999999995,533.9 L454.0,541.1 M454.0,533.9 L446.79999999999995,541.1" stroke="#2424ff" stroke-width="1"/><circle cx="361.7" cy="312.9" r="13.6" fill="#000" fill-opacity="0.10"/><circle cx="360.9" cy="311.9" r="13.3" fill="url(#circg)"/><text x="361.09999999999997" y="318.09999999999997" font-size="17.5" fill="#fff" text-anchor="middle">1</text><circle cx="472.2" cy="341" r="13.6" fill="#000" fill-opacity="0.10"/><circle cx="471.4" cy="340" r="13.3" fill="url(#circg)"/><text x="471.59999999999997" y="346.2" font-size="17.5" fill="#fff" text-anchor="middle">2</text><circle cx="427.40000000000003" cy="374.3" r="13.6" fill="#000" fill-opacity="0.10"/><circle cx="426.6" cy="373.3" r="13.3" fill="url(#circg)"/><text x="426.8" y="379.5" font-size="17.5" fill="#fff" text-anchor="middle">5</text><circle cx="567.3" cy="357.4" r="13.6" fill="#000" fill-opacity="0.10"/><circle cx="566.5" cy="356.4" r="13.3" fill="url(#circg)"/><text x="566.7" y="362.59999999999997" font-size="17.5" fill="#fff" text-anchor="middle">3</text><circle cx="652.3" cy="353.9" r="13.6" fill="#000" fill-opacity="0.10"/><circle cx="651.5" cy="352.9" r="13.3" fill="url(#circg)"/><text x="651.7" y="359.09999999999997" font-size="17.5" fill="#fff" text-anchor="middle">3</text><circle cx="743.1999999999999" cy="360.5" r="13.6" fill="#000" fill-opacity="0.10"/><circle cx="742.4" cy="359.5" r="13.3" fill="url(#circg)"/><text x="742.6" y="365.7" font-size="17.5" fill="#fff" text-anchor="middle">4</text><circle cx="428.40000000000003" cy="483.8" r="13.6" fill="#000" fill-opacity="0.10"/><circle cx="427.6" cy="482.8" r="13.3" fill="url(#circg)"/><text x="427.8" y="489.0" font-size="17.5" fill="#fff" text-anchor="middle">5</text><circle cx="702.3" cy="526" r="13.6" fill="#000" fill-opacity="0.10"/><circle cx="701.5" cy="525" r="13.3" fill="url(#circg)"/><text x="701.7" y="531.2" font-size="17.5" fill="#fff" text-anchor="middle">6</text><g font-size="8.8" fill="#000" text-anchor="middle"><text x="360.5" y="271.9">用户</text><text x="454.8" y="271.6">销售网站</text><text x="544.0" y="272.1">顾客售后服务器</text><text x="728.5" y="271.5">付款</text><text x="450.5" y="313.2">提供主接口</text><text x="544.5" y="312.8">控制中心</text><text x="727.9" y="316.8">必须提供主接</text><text x="728.0" y="325.2">口</text><text x="361.8" y="396.7">外部用户数</text><text x="501.6" y="370.0">添加项目</text><text x="502.4" y="400.9">«返回»</text><text x="408.9" y="466.6">完成订单</text><text x="495.1" y="500.1">完成订单</text><text x="645.1" y="509.1">支付（客户，餐厅，价格）</text><text x="641.4" y="544.5">«返回»</text><text x="590.9" y="564.2">烹饪食物</text><text x="594.5" y="602.0">&lt;&lt;收录&gt;&gt;</text></g>
</g></svg>
</div></body></html>
